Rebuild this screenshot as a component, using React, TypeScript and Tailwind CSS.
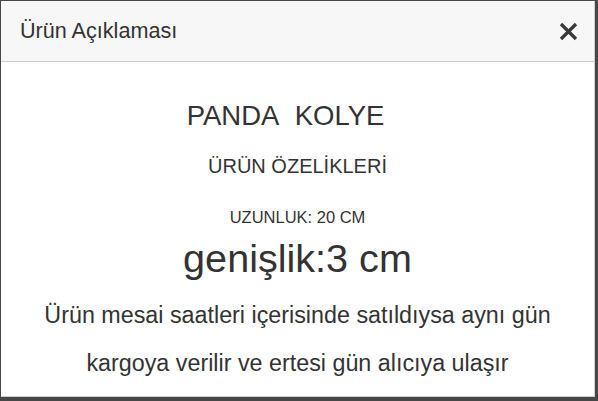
export default function App() {
  return (
    <div className="h-[401px] w-[598px] overflow-hidden bg-[#474747] pl-px pt-px font-['Liberation_Sans',Arial,sans-serif] text-[#333]">
      <div className="flex h-[396px] w-[594px] flex-col border-b border-r border-[#cfcfcf] bg-white">
        <div className="flex h-[61px] shrink-0 items-center justify-between border-b border-[#cccccc] bg-[#f7f7f7] pl-[19px] pr-[16px]">
          <h4 className="text-[21.6px] leading-none">Ürün Açıklaması</h4>
          <svg width="19" height="19" viewBox="0 0 19 19" className="text-[#3a3a3a]">
            <path d="M2 2 L17 17 M17 2 L2 17" stroke="currentColor" strokeWidth="3.3" strokeLinecap="butt" />
          </svg>
        </div>
        <div className="flex flex-col items-center pt-[39px] text-center">
          <p className="pr-[24px] text-[27.5px] leading-[30px]">PANDA&nbsp; KOLYE</p>
          <p className="mt-[23px] text-[20px] leading-[24px]">ÜRÜN ÖZELİKLERİ</p>
          <p className="mt-[29px] text-[16.5px] leading-[20px]">UZUNLUK: 20 CM</p>
          <p className="mt-[8px] text-[39.6px] leading-[47px]">genişlik:3 cm</p>
          <p className="mt-[9px] text-[23.3px] leading-[48px]">Ürün mesai saatleri içerisinde satıldıysa aynı gün</p>
          <p className="text-[23.3px] leading-[48px]">kargoya verilir ve ertesi gün alıcıya ulaşır</p>
        </div>
      </div>
    </div>
  );
}
